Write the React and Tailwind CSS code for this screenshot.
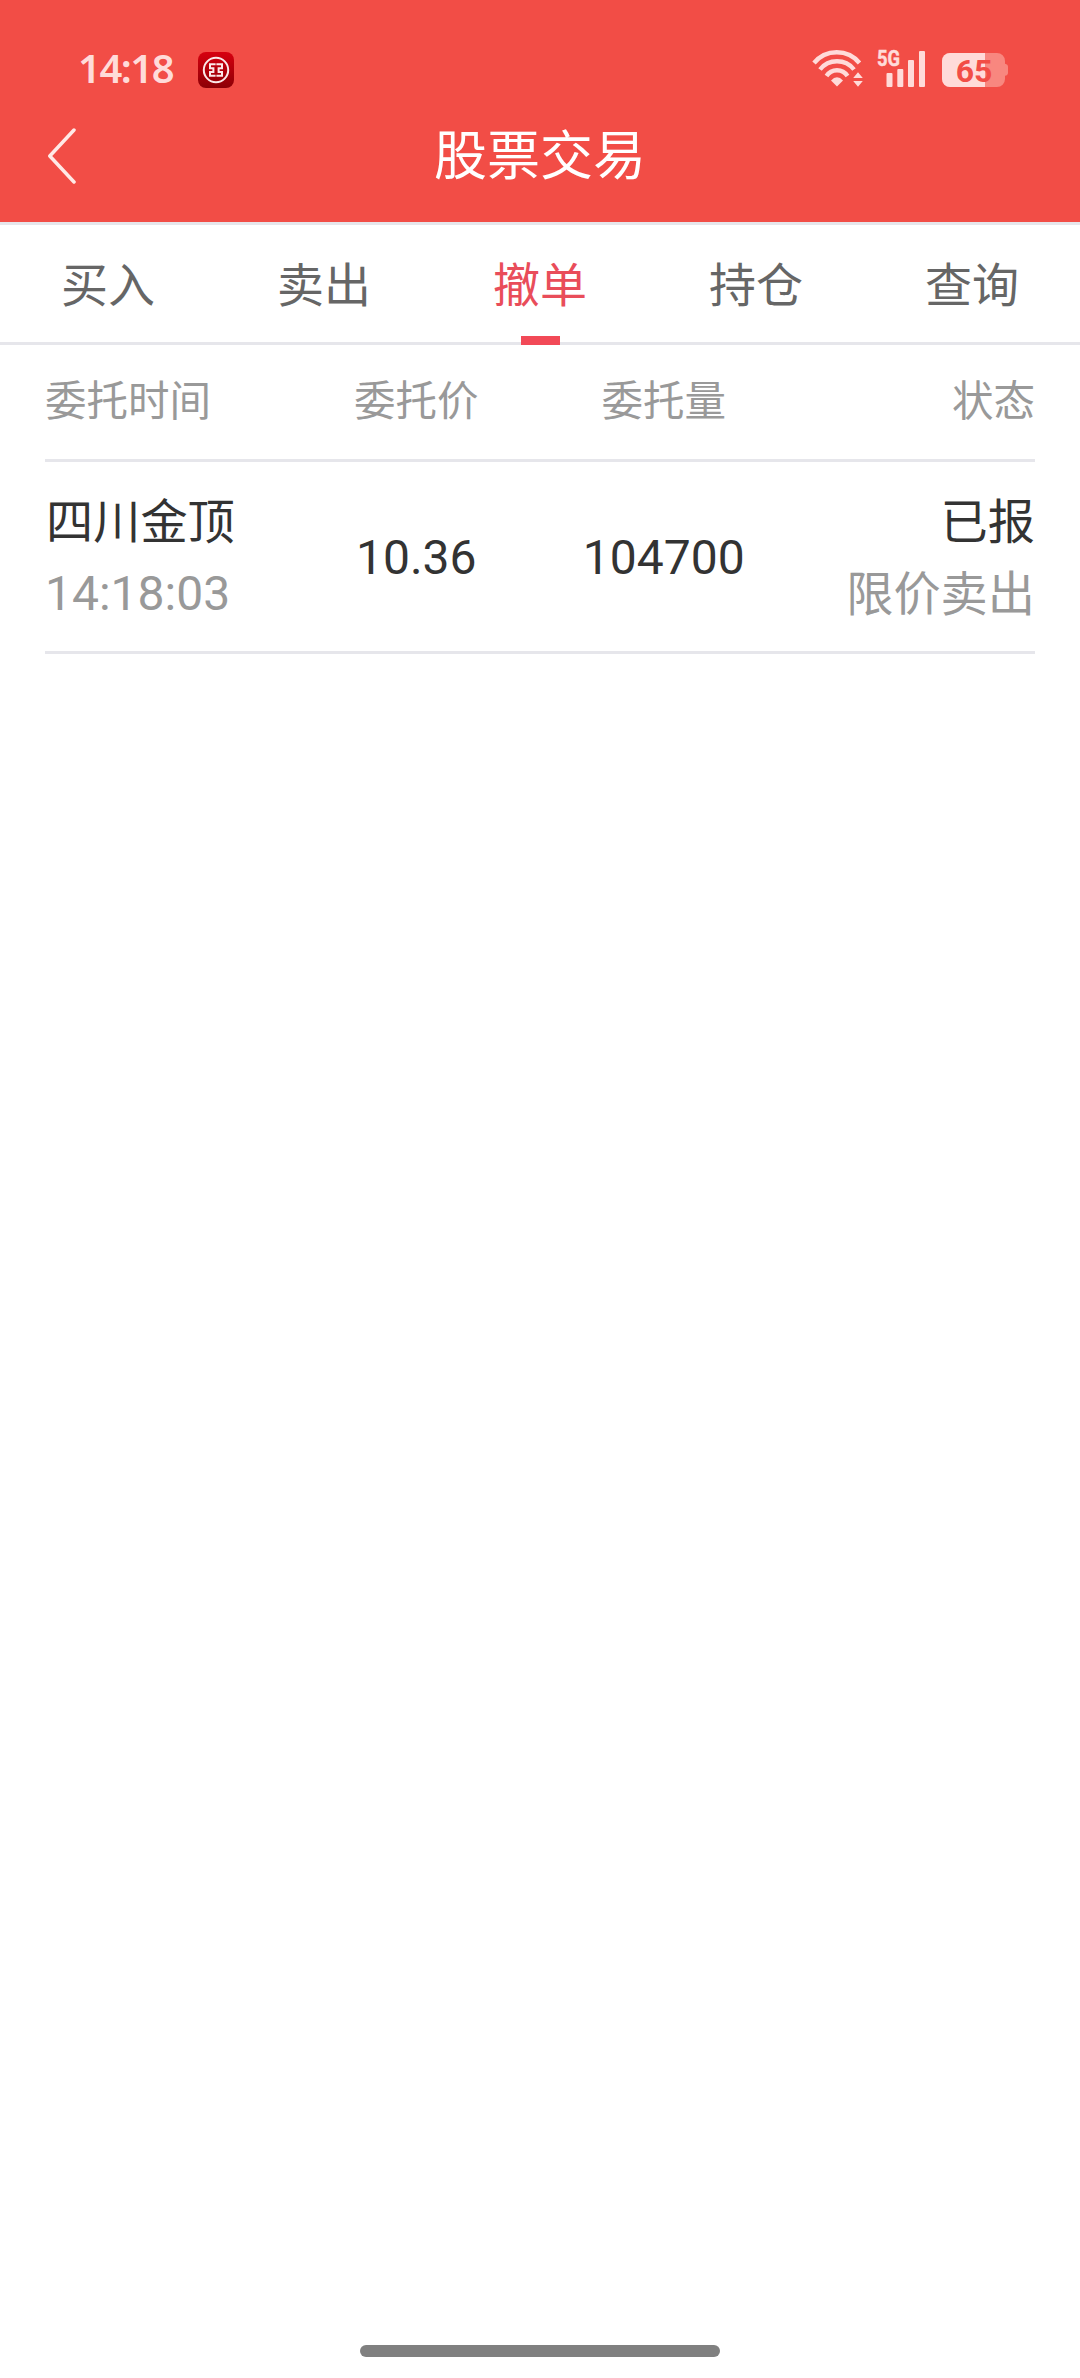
import React from 'react';

const tabs = ['买入', '卖出', '撤单', '持仓', '查询'];

const orders = [
  { name: '四川金顶', time: '14:18:03', price: '10.36', amount: '104700', status: '已报', type: '限价卖出' },
];

const BankIcon = () => (
  <svg className="ml-6 h-9 w-9" viewBox="0 0 36 36" fill="none">
    <defs>
      <linearGradient id="bank" x1="0" y1="0" x2="0" y2="1">
        <stop offset="0" stopColor="#d7000f" />
        <stop offset="1" stopColor="#8c0006" />
      </linearGradient>
    </defs>
    <rect width="36" height="36" rx="8" fill="url(#bank)" />
    <circle cx="18" cy="18" r="12.2" stroke="#fbe9e9" strokeWidth="2" />
    <path d="M17.6 12.3H12v3.9h3.4v3.7H12v3.9h5.6M18.4 12.3H24v3.9h-3.4v3.7H24v3.9h-5.6" stroke="#fbe9e9" strokeWidth="2" />
  </svg>
);

const WifiIcon = () => (
  <svg className="h-10 w-[52px]" viewBox="0 0 52 40" fill="none">
    <path d="M2 13a29.4 29.4 0 0 1 45.5 0" stroke="#ffdbd9" strokeWidth="4.4" />
    <path d="M8 19.5a21.7 21.7 0 0 1 34 0" stroke="#ffdbd9" strokeWidth="4.4" />
    <path d="M14.5 26a12.500 12.500 0 0 1 21 0" stroke="#ffdbd9" strokeWidth="4.4" />
    <path d="M19 30.5q6-6.500 12 0l-6 6z" fill="#ffdbd9" />
    <path d="M46 22.3l4.8 5.700h-9.600zM46 36.700l4.800-5.700h-9.600z" fill="#ffdbd9" />
  </svg>
);

const SignalIcon = () => (
  <svg className="ml-3 h-10 w-[50px] overflow-visible" viewBox="0 0 50 40" fill="#ffdbd9">
    <text x="1" y="16" textLength="23" lengthAdjust="spacingAndGlyphs" stroke="#ffdbd9" strokeWidth="0.5" className="font-['Roboto',sans-serif] text-[22px] font-bold">5G</text>
    <rect x="10.5" y="23" width="6" height="14" rx="1" />
    <rect x="21.3" y="19" width="6" height="18" rx="1" />
    <rect x="32" y="10" width="6" height="27" rx="1" />
    <rect x="43" y="1" width="6" height="36" rx="1" />
  </svg>
);

const BatteryIcon = () => (
  <svg className="ml-4 h-10 w-[66px]" viewBox="0 0 66 40">
    <defs>
      <clipPath id="level">
        <rect width="43" height="40" />
      </clipPath>
    </defs>
    <path d="M8 3h47a8 8 0 0 1 8 8v2.7q3 .5 3 3v6q0 2.500-3 3V29a8 8 0 0 1-8 8H8a8 8 0 0 1-8-8V11a8 8 0 0 1 8-8z" fill="#f8877f" />
    <rect y="3" width="63" height="34" rx="8" fill="#ffdbd9" clipPath="url(#level)" />
    <text x="32" y="31.5" textAnchor="middle" fill="#f24d46" className="font-['Roboto',sans-serif] text-[32px] font-bold">65</text>
  </svg>
);

const App = () => {
  return (
    <div className="flex h-[2378px] w-[1080px] flex-col bg-white font-['Roboto','Noto_Sans_CJK_SC',sans-serif]">
      {/* Header */}
      <header className="h-[222px] bg-[#f24d46]">
        <div className="flex h-[110px] items-center justify-between pt-[30px] pr-[72px] pl-[78px]">
          <div className="flex items-center">
            <span className="w-24 pb-1 font-['Noto_Sans',sans-serif] text-[40px] leading-none font-semibold tracking-[-1.5px] text-[#ffdbd9]">14:18</span>
            <BankIcon />
          </div>
          <div className="flex items-center">
            <WifiIcon />
            <SignalIcon />
            <BatteryIcon />
          </div>
        </div>
        <div className="grid h-[92px] grid-cols-[200px_1fr_200px] items-center">
          <svg className="ml-12 h-14 w-7" viewBox="0 0 28 56" fill="none">
            <path d="M26 2L1.8 28 26 54" stroke="#ffe9e6" strokeWidth="3.5" strokeLinecap="round" strokeLinejoin="round" />
          </svg>
          <h1 className="pt-[3px] text-center text-[53px] leading-none text-white">股票交易</h1>
        </div>
      </header>

      {/* Tabs */}
      <nav className="grid h-[123px] grid-cols-5 border-y-[3px] border-[#e6e6eb]">
        {tabs.map((tab) => (
          <div key={tab} className="relative flex items-center justify-center pt-1.5">
            <span className={tab === '撤单' ? 'text-[47px] text-[#e94d5a]' : 'text-[47px] text-[#666666]'}>{tab}</span>
            {tab === '撤单' && <div className="absolute -bottom-[3px] h-[9px] w-[39px] bg-[#f24957]" />}
          </div>
        ))}
      </nav>

      {/* Orders */}
      <main className="grow px-[45px]">
        <div className="grid h-[117px] grid-cols-4 items-center border-b-[3px] border-[#e6e6eb] pt-px text-center text-[41.5px] text-[#999999]">
          <span className="text-left">委托时间</span>
          <span>委托价</span>
          <span>委托量</span>
          <span className="text-right">状态</span>
        </div>
        {orders.map((order) => (
          <div key={order.time} className="grid h-48 grid-cols-4 items-center border-b-[3px] border-[#e6e6eb] pt-0.5 text-center text-[48px] leading-[72px] text-[#333333]">
            <div className="text-left">
              <p className="pl-px pt-0.5 text-[47.2px] leading-[70px]">{order.name}</p>
              <p className="text-[#999999]">{order.time}</p>
            </div>
            <span>{order.price}</span>
            <span>{order.amount}</span>
            <div className="pt-0.5 text-right text-[47.2px]">
              <p>{order.status}</p>
              <p className="text-[#999999]">{order.type}</p>
            </div>
          </div>
        ))}
      </main>

      {/* Home indicator */}
      <div className="mx-auto mb-[21px] h-3 w-[360px] rounded-full bg-[#808080]" />
    </div>
  );
};

export default App;
